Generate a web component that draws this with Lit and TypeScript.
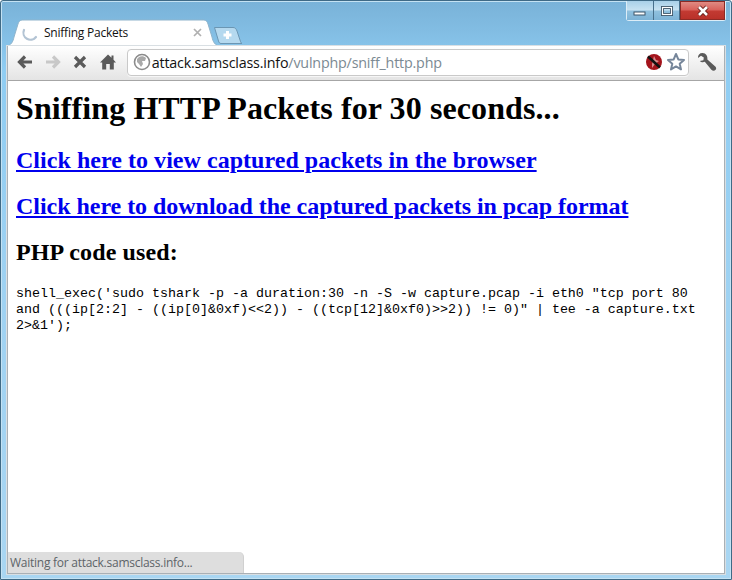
import { LitElement, html, css } from "lit";
import { customElement } from "lit/decorators.js";

@customElement("app-root")
export class AppRoot extends LitElement {
  static styles = css`
    :host { display: block; width: 732px; height: 580px; overflow: hidden; }
    .window {
      box-sizing: border-box; width: 732px; height: 580px;
      display: flex; flex-direction: column;
      border: 1px solid #3f6a86; border-radius: 3px 3px 0 0;
      background: linear-gradient(180deg, #79b2d8 0, #82bde3 30px, #8fcdf3 70px, #9fd2f2 300px, #a9d6f2 100%);
      box-shadow: inset 0 0 0 1px #c4e2f3;
    }
    .titlebar { height: 18px; flex: none; display: flex; justify-content: flex-end; padding-right: 5px; }
    .controls { display: flex; height: 20px; border: 1px solid #dcedf7; border-top: 0; border-radius: 0 0 3px 3px; box-sizing: border-box; width: 100px; }
    .ctl { display: flex; align-items: center; justify-content: center; box-sizing: border-box; height: 100%; background: linear-gradient(180deg, #a9d0e8 0, #c6e1f1 45%, #8fc0de 55%, #7db3d6 100%); border-right: 1px solid #48708c; }
    .min { width: 27px; } .max { width: 26px; }
    .close { flex: 1; border-right: 0; background: linear-gradient(180deg, #e09088 0, #d9635c 45%, #c23a32 55%, #b83028 100%); box-shadow: inset 0 0 0 1px #8c2a25; }
    .tabs { height: 27px; flex: none; display: flex; align-items: flex-end; padding-left: 6px; }
    .tab { position: relative; box-sizing: border-box; width: 212px; height: 27px; display: flex; align-items: center; padding: 0 17px 0 37px; gap: 6px; }
    .tab-bg { position: absolute; inset: 0; }
    .tab-spin { position: absolute; left: 14px; top: 6px; }
    .tab-title { position: relative; flex: 1; font: 12px "Open Sans", sans-serif; color: #111; letter-spacing: -0.23px; }
    .tab-x { position: relative; display: block; }
    .newtab { display: block; margin: 0 0 1px -6px; }
    .chrome { flex: 1; min-height: 0; margin: 0 6px 5px 6px; display: flex; flex-direction: column; border: 1px solid #a9b0b5; border-top: 0; background: #fff; position: relative; box-shadow: 0 0 0 1px #d9dfe3; }
    .toolbar { height: 35px; flex: none; box-sizing: border-box; display: flex; align-items: center; padding: 0 3px 2px 3px; background: linear-gradient(180deg, #ffffff 0, #f4f4f4 40%, #e4e4e4 100%); border-bottom: 1px solid #a6a6a6; }
    .tb { width: 27.7px; height: 28px; display: flex; align-items: center; justify-content: center; flex: none; }
    .tb.wrench { width: 28px; }
    .omni { flex: 1; margin: 0 4px 0 5px; box-sizing: border-box; height: 27px; display: flex; align-items: center; background: #fff; border: 1px solid #c9c9c9; border-radius: 4px; padding: 0 2px 0 5px; box-shadow: 0 1px 0 #f6f6f6; }
    .url { flex: 1; margin-left: 1px; font: 14.3px "Open Sans", sans-serif; letter-spacing: -0.19px; color: #111; white-space: nowrap; }
    .url span { color: #7b8a93; }
    .omni svg { flex: none; display: block; }
    .star { margin-left: 3px; }
    .page { flex: 1; min-height: 0; padding: 9px 8px 8px; overflow: hidden; font-family: "Liberation Serif", serif; color: #000; background: #fff; }
    h1 { font-size: 32px; line-height: 37px; font-weight: bold; margin: 0 0 20px 0; letter-spacing: 0.1px; }
    h2 { font-size: 24px; line-height: 27px; font-weight: bold; margin: 0 0 19px 0; }
    h2 a { color: #0000ee; text-decoration: underline; }
    .l1 { letter-spacing: 0.04px; }
    .l2 { letter-spacing: -0.035px; }
    .l3 { letter-spacing: 0.14px; }
    .code { font: 13.333px/16px "Liberation Mono", monospace; margin: 0; padding-top: 1px; }
    .status { position: absolute; left: 0; bottom: 0; box-sizing: border-box; width: 236px; height: 21px; background: #dedede; border-top-right-radius: 5px; font: 12px/22px "Open Sans", sans-serif; color: #5d6468; padding-left: 2px; border-right: 1px solid #d0d0d0; letter-spacing: -0.26px; }
  `;

  render() {
    return html`
      <div class="window">
        <div class="titlebar">
          <div class="controls">
            <div class="ctl min">
              <svg width="16" height="10" viewBox="0 0 16 10"><rect x="2" y="6" width="11" height="3" fill="#fff" stroke="#3d5568" stroke-width="1"/></svg>
            </div>
            <div class="ctl max">
              <svg width="14" height="12" viewBox="0 0 14 12"><rect x="2.5" y="2.5" width="9" height="7" fill="none" stroke="#3d5568" stroke-width="3"/><rect x="2.5" y="2.5" width="9" height="7" fill="none" stroke="#fff" stroke-width="1.2"/></svg>
            </div>
            <div class="ctl close">
              <svg width="14" height="12" viewBox="0 0 14 12"><path d="M3 2 L11 10 M11 2 L3 10" stroke="#5c1a16" stroke-width="4.4" fill="none"/><path d="M3 2 L11 10 M11 2 L3 10" stroke="#fff" stroke-width="2.6" fill="none"/></svg>
            </div>
          </div>
        </div>
        <div class="tabs">
          <div class="tab">
            <svg class="tab-bg" width="212" height="27" viewBox="0 0 212 27">
              <path d="M0 27 C4 26 6 23 7 18 L11 5 C12 2 13 1 17 1 L195 1 C199 1 200 2 201 5 L205 18 C206 23 208 26 212 27 Z" fill="#fff" stroke="#8fb4cc" stroke-width="1"/>
              <path d="M1 27.5 L211 27.5" stroke="#fff" stroke-width="2"/>
            </svg>
            <svg class="tab-spin" width="18" height="18" viewBox="0 0 18 18"><path d="M3 5 A7 7 0 0 0 15 12" fill="none" stroke="#b3c4d4" stroke-width="2.2" stroke-linecap="round"/></svg>
            <span class="tab-title">Sniffing Packets</span>
            <svg class="tab-x" width="9" height="9" viewBox="0 0 9 9"><path d="M1 1 L8 8 M8 1 L1 8" stroke="#b0b0b0" stroke-width="1.7"/></svg>
          </div>
          <svg class="newtab" width="30" height="19" viewBox="0 0 30 19">
            <path d="M1.5 1.5 L20 1.5 C22 1.5 23 2.5 24 5 L27 14 C27.6 16 28 17 29 17.5 L8 17.5 C6.5 17.5 6 16.5 5.5 15 Z" fill="#b5d9ef" stroke="#6b96b3"/>
            <path d="M14.5 5 V13 M10.5 9 H18.5" stroke="#fff" stroke-width="3"/>
          </svg>
        </div>
        <div class="chrome">
          <div class="toolbar">
            <div class="tb">
              <svg width="18" height="16" viewBox="0 0 18 16"><path d="M16 8 H5 M9 2.5 L3.5 8 L9 13.5" fill="none" stroke="#5a5a5a" stroke-width="3.2"/></svg>
            </div>
            <div class="tb">
              <svg width="18" height="16" viewBox="0 0 18 16"><path d="M2 8 H13 M9 2.5 L14.5 8 L9 13.5" fill="none" stroke="#c8c8c8" stroke-width="3.2"/></svg>
            </div>
            <div class="tb">
              <svg width="16" height="16" viewBox="0 0 16 16"><path d="M3 3 L13 13 M13 3 L3 13" stroke="#5a5a5a" stroke-width="3.2"/></svg>
            </div>
            <div class="tb">
              <svg width="18" height="18" viewBox="0 0 18 18"><path d="M9 1.5 L12.5 4.8 V2.5 H14.5 V6.7 L17 9.5 H14.8 V16.5 H10.8 V11 H7.2 V16.5 H3.2 V9.5 H1 Z" fill="#5a5a5a"/></svg>
            </div>
            <div class="omni">
              <svg width="18" height="18" viewBox="0 0 18 18"><circle cx="9" cy="9" r="7.5" fill="#fff" stroke="#8b8b8b" stroke-width="1.6"/><path d="M6 4 C8 3 11 3 13 5 L12 8 L9 8 L10 11 L8 14 L6 11 L4 9 L4 6 Z" fill="#a9a9a9"/></svg>
              <div class="url">attack.samsclass.info<span>/vulnphp/sniff_http.php</span></div>
              <svg width="18" height="18" viewBox="0 0 18 18">
                <circle cx="9" cy="9" r="8" fill="#a4141c"/>
                <path d="M9 3 L11 7 L14 8 L10 11 L7 15 L7 11 Z" fill="#e8b4b4" opacity=".75"/>
                <path d="M3 3.5 L15 14.5" stroke="#111" stroke-width="2.6"/>
              </svg>
              <svg class="star" width="20" height="20" viewBox="0 0 20 20"><path d="M10 2 L12.3 7.4 L18 7.9 L13.7 11.7 L15 17.4 L10 14.4 L5 17.4 L6.3 11.7 L2 7.9 L7.7 7.4 Z" fill="#fff" stroke="#76869a" stroke-width="2" stroke-linejoin="round"/></svg>
            </div>
            <div class="tb wrench">
              <svg width="20" height="20" viewBox="0 0 20 20"><path d="M5.5 1 C2.5 1 .8 3 1 6 L4 3.8 L6.8 5.4 L6.4 8.2 L2.8 9 C4 10.2 6 10.6 7.8 9.8 L14.4 17.8 C15.6 19 17.6 19 18.6 17.8 C19.6 16.6 19.2 15 18 14.2 L10.4 7.6 C10.8 4 9 1 5.5 1 Z" fill="#5a5a5a"/></svg>
            </div>
          </div>
          <div class="page">
            <h1>Sniffing HTTP Packets for 30 seconds...</h1>
            <h2 class="l1"><a href="#">Click here to view captured packets in the browser</a></h2>
            <h2 class="l2"><a href="#">Click here to download the captured packets in pcap format</a></h2>
            <h2 class="l3">PHP code used:</h2>
            <p class="code">shell_exec('sudo tshark -p -a duration:30 -n -S -w capture.pcap -i eth0 "tcp port 80 and (((ip[2:2] - ((ip[0]&amp;0xf)&lt;&lt;2)) - ((tcp[12]&amp;0xf0)&gt;&gt;2)) != 0)" | tee -a capture.txt 2&gt;&amp;1');</p>
          </div>
          <div class="status">Waiting for attack.samsclass.info...</div>
        </div>
      </div>
    `;
  }
}
